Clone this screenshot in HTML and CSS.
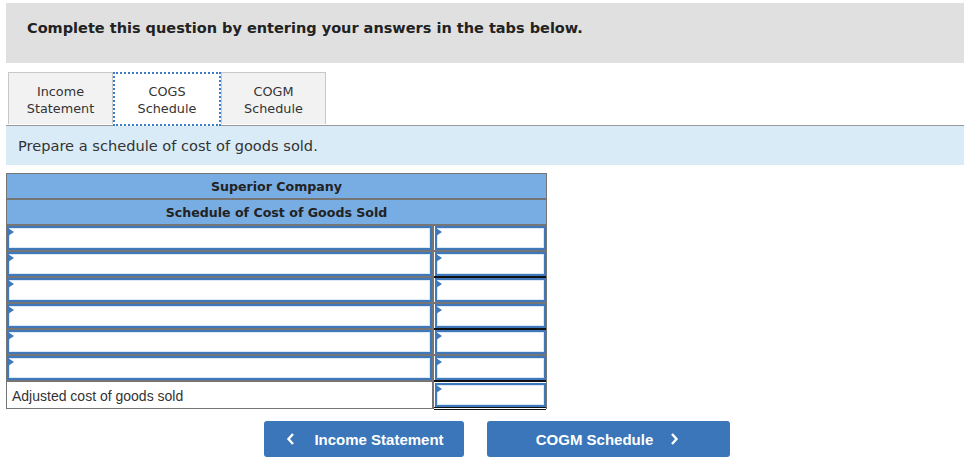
FILE: index.html
```html
<!DOCTYPE html>
<html>
<head>
<meta charset="utf-8">
<link rel="stylesheet" href="styles.css">
</head>
<body>
<div class="page">
  <div class="header">Complete this question by entering your answers in the tabs below.</div>
  <div class="tabs">
    <div class="tab">Income<br>Statement</div>
    <div class="tab active">COGS<br>Schedule</div>
    <div class="tab">COGM<br>Schedule</div>
  </div>
  <div class="instruction">Prepare a schedule of cost of goods sold.</div>
  <div class="sheet">
    <div class="title">Superior Company</div>
    <div class="title">Schedule of Cost of Goods Sold</div>
    <div class="row"><div class="cell-l"><div class="inp"><span class="tri"></span></div></div><div class="cell-r"><div class="inp"><span class="tri"></span></div></div></div>
    <div class="row"><div class="cell-l"><div class="inp"><span class="tri"></span></div></div><div class="cell-r single"><div class="inp"><span class="tri"></span></div></div></div>
    <div class="row"><div class="cell-l"><div class="inp"><span class="tri"></span></div></div><div class="cell-r"><div class="inp"><span class="tri"></span></div></div></div>
    <div class="row"><div class="cell-l"><div class="inp"><span class="tri"></span></div></div><div class="cell-r single"><div class="inp"><span class="tri"></span></div></div></div>
    <div class="row"><div class="cell-l"><div class="inp"><span class="tri"></span></div></div><div class="cell-r"><div class="inp"><span class="tri"></span></div></div></div>
    <div class="row"><div class="cell-l"><div class="inp"><span class="tri"></span></div></div><div class="cell-r single"><div class="inp"><span class="tri"></span></div></div></div>
    <div class="row last"><div class="cell-l text">Adjusted cost of goods sold</div><div class="cell-r double"><div class="inp"><span class="tri"></span></div></div></div>
  </div>
  <div class="nav">
    <button class="btn prev"><svg width="10" height="14" viewBox="0 0 10 14"><polyline points="7,2 2.5,7 7,12" fill="none" stroke="#fff" stroke-width="2.4"/></svg><span>Income Statement</span></button>
    <button class="btn next"><span>COGM Schedule</span><svg width="10" height="14" viewBox="0 0 10 14"><polyline points="3,2 7.5,7 3,12" fill="none" stroke="#fff" stroke-width="2.4"/></svg></button>
  </div>
</div>
</body>
</html>
```
FILE: styles.css
```css
html, body { margin: 0; padding: 0; background: #fff; }
.page { width: 958px; padding: 3px 0 0 6px; }
.header {
  background: #e0e0e0; height: 60px; box-sizing: border-box;
  padding: 17px 0 0 21px;
  font-family: "DejaVu Sans", Verdana, sans-serif; font-weight: bold; font-size: 14.5px; color: #222;
}
.tabs { display: flex; margin-top: 9px; border-bottom: 1px solid #9a9a9a; padding-left: 2px; }
.tab {
  width: 105px; height: 52px; box-sizing: border-box;
  background: #f2f2f2; border: 1px solid #c8c8c8; border-bottom: none;
  display: flex; align-items: center; justify-content: center; text-align: center;
  font-family: "DejaVu Sans", Tahoma, sans-serif; font-size: 12.8px; line-height: 17px; color: #333;
  padding-top: 2px;
}
.tab.active { width: 108px; background: #fff; border: 2px dotted #3d7cc9; height: 54px; margin-bottom: -1px; }
.instruction {
  background: #daebf8; height: 39px; box-sizing: border-box; padding: 11px 0 0 12px;
  font-family: "DejaVu Sans", Verdana, sans-serif; font-size: 14.6px; color: #333;
}
.sheet { margin-top: 8px; width: 541px; border: 1px solid #757575; border-bottom: none; box-sizing: border-box; }
.title {
  background: #78ade3; height: 26px; box-sizing: border-box; border-bottom: 2px solid #757575;
  display: flex; align-items: center; justify-content: center; padding-top: 1px;
  font-family: "DejaVu Sans", Tahoma, sans-serif; font-weight: bold; font-size: 12.6px; color: #222;
}
.row { display: flex; height: 26px; }
.cell-l { width: 427px; border-right: 2px solid #757575; border-bottom: 2px solid #757575; box-sizing: border-box; }
.cell-r { flex: 1; border-bottom: 2px solid #757575; box-sizing: border-box; padding-left: 1px; }
.cell-r.single { border-bottom: 2px solid #111; }
.row.last .cell-l { border-bottom: 1px solid #757575; height: 27px; }
.row.last { height: 27px; }
.cell-r.double { border-bottom: 3px double #111; height: 28px; padding-top: 1px; }
.inp {
  position: relative; height: 100%; box-sizing: border-box;
  border: 2px solid #3f78bb; box-shadow: inset 0 0 0 1px #dbe8f5; background: #fff;
}
.tri {
  position: absolute; left: -1px; top: 0; width: 0; height: 0;
  border-top: 4px solid transparent; border-bottom: 4px solid transparent; border-left: 6px solid #3f78bb;
}
.cell-l.text {
  display: flex; align-items: center; padding: 2px 0 0 5px;
  font-family: "Liberation Sans", Arial, sans-serif; font-size: 14px; color: #333;
}
.nav { display: flex; gap: 23px; padding-left: 258px; margin-top: 12px; }
.btn {
  height: 36px; border: none; border-radius: 3px; background: #3a76b9; color: #fff;
  display: flex; align-items: center; justify-content: center;
  font-family: "Liberation Sans", Arial, sans-serif; font-weight: bold; font-size: 15px; padding: 0;
}
.btn.prev { width: 200px; gap: 18px; padding-left: 2px; }
.btn.next { width: 243px; gap: 16px; padding-right: 2px; }
```
